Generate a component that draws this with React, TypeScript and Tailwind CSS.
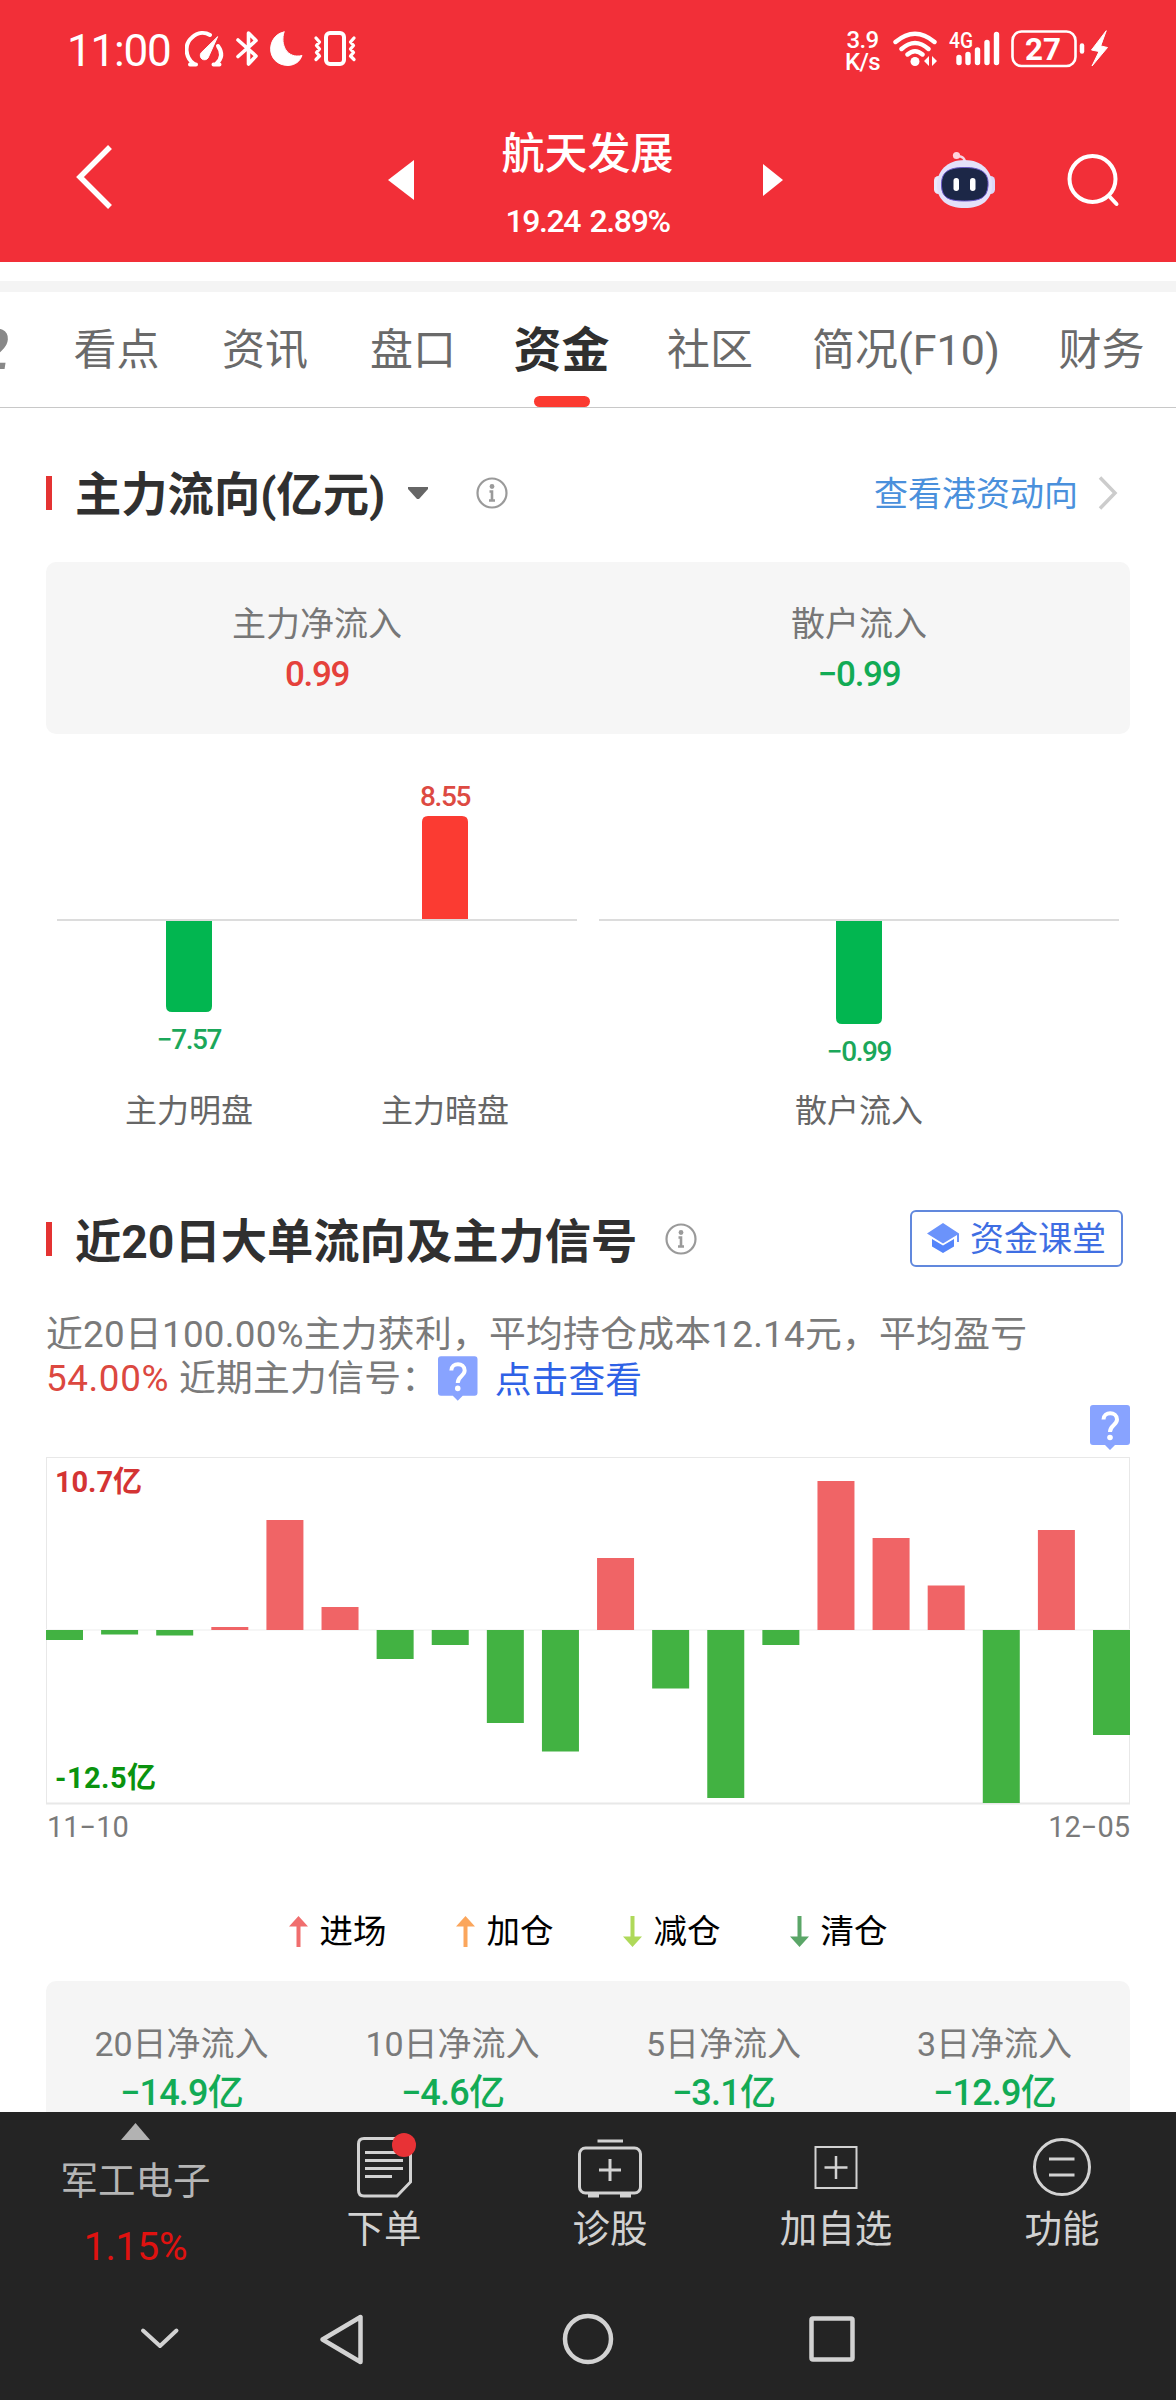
import type { ReactNode } from 'react';

const tabs = [
  { label: '看点', width: 'w-[149px]' },
  { label: '资讯', width: 'w-[148px]' },
  { label: '盘口', width: 'w-[148px]' },
  { label: '资金', width: 'w-[149px]', active: true },
  { label: '社区', width: 'w-[148px]' },
  { label: '简况(F10)', width: 'w-[244px]' },
  { label: '财务', width: 'w-[147px]' },
];

const summary = [
  { label: '主力净流入', value: '0.99', color: 'text-[#e5413b]' },
  { label: '散户流入', value: '−0.99', color: 'text-[#12ab55]' },
];

// x is the bar's centre, size its signed height
const flows = [
  { label: '主力明盘', value: '−7.57', x: 189, size: -91 },
  { label: '主力暗盘', value: '8.55', x: 445, size: 103 },
  { label: '散户流入', value: '−0.99', x: 859, size: -103 },
];

const daily = [-10, -4.5, -5.5, 3, 110, 23, -29, -15, -93, -121.5, 72, -58.5, -168, -15, 149, 92, 44.5, -173, 100, -105];

const signals = [
  { label: '进场', color: '#f06e6e', up: true },
  { label: '加仓', color: '#fba65c', up: true },
  { label: '减仓', color: '#afd95a', up: false },
  { label: '清仓', color: '#5ba668', up: false },
];

const netFlows = [
  { label: '20日净流入', value: '−14.9亿' },
  { label: '10日净流入', value: '−4.6亿' },
  { label: '5日净流入', value: '−3.1亿' },
  { label: '3日净流入', value: '−12.9亿' },
];

function StatusBar() {
  return (
    <div className="h-[98px] pl-[67px] pr-[66px] flex items-center text-white">
      <span className="w-[118px] mt-[3px] text-[44px] leading-[44px] tracking-[-1.200px]">11:00</span>
      <svg width="172" height="38" viewBox="185 31 172 38" fill="none" stroke="#fff" strokeWidth="4" strokeLinecap="round" strokeLinejoin="round">
        <path d="M194 65 C185 59 184 45 192 38.500 C198 33 205 33 210 36" />
        <path d="M190 65.500h6M218 47 C223 54 222 60 216 65 M219.500 65.500h-6" />
        <path d="M217.500 38 L208 59 A4 4 0 1 1 201 54 Z" fill="#fff" strokeWidth="1" />
        <path d="M238 41 L256 57 L248.500 65 V34 L256 41.500 L238 57.500" strokeWidth="3.600" />
        <path d="M284 33 C266 36 265 66 288 66.500 C296 66 300 62 302 56.500 C287 60 280 46 284 33Z" fill="#fff" strokeWidth="1" />
        <rect x="326" y="34" width="18" height="31" rx="4" />
        <path d="M316 39l3.500 4-3 3.500 3 3.500-3 3.500 3 3.500-3.500 3.500M354 39l-3.500 4 3 3.500-3 3.500 3 3.500-3 3.500 3.500 3.500" strokeWidth="3.300" />
      </svg>
      <div className="ml-auto w-[48px] mt-[3px] text-[24px] leading-[22px] text-center font-medium tracking-[-0.6px] pr-[13px]">
        <div>3.9</div>
        <div>K/s</div>
      </div>
      <svg width="217" height="40" viewBox="893 30 217 40" fill="none" stroke="#fff" strokeLinecap="round">
        <path d="M895.500 43 Q915 26.500 934.500 43 M901.500 50 Q915 38 928.500 50 M907.500 55.500 Q915 49 922.500 55.500" strokeWidth="4.400" />
        <circle cx="915" cy="62.500" r="4.500" fill="#fff" stroke="none" />
        <path d="M924 62l5-5v10zM932 57l5 5-5 5z" fill="#fff" stroke="none" />
        <text x="949" y="49" fontSize="22" fontWeight="500" fill="#fff" stroke="none" textLength="24" lengthAdjust="spacingAndGlyphs">4G</text>
        <path d="M959 58.500v5M968 55.500v8M977.500 51v12.500M987 43.500v20M996.500 35.500v28" strokeWidth="5.400" />
        <rect x="1012.500" y="32.500" width="63" height="34.500" rx="9" strokeWidth="2.600" />
        <path d="M1082 46.500v6" strokeWidth="4.500" />
        <text x="1025" y="61" fontSize="32" fontWeight="700" fill="#fff" stroke="none" textLength="36" lengthAdjust="spacingAndGlyphs">27</text>
        <path d="M1106 32 L1091.500 51 L1099 52.500 L1092 67 L1107.500 48.500 L1101 47 Z" fill="#fff" strokeWidth="1" strokeLinejoin="round" />
      </svg>
    </div>
  );
}

function Robot() {
  return (
    <svg className="ml-[151px]" width="62" height="60" viewBox="934 148 62 60">
      <path d="M965 163 Q966 154 957 154" fill="none" stroke="#f5d5e4" strokeWidth="2.500" />
      <circle cx="956.500" cy="153.500" r="3.600" fill="#ffd3dd" />
      <rect x="934" y="174" width="9" height="18" rx="4.500" fill="#ece9fb" />
      <rect x="986" y="174" width="9" height="18" rx="4.500" fill="#dcd7f8" />
      <path d="M964.500 158 C982 158 992 169 992 183 C992 198 982 206 964.500 206 C947 206 937 198 937 183 C937 169 947 158 964.500 158Z" fill="#e4e1fa" />
      <path d="M964.500 165.500 C982 165.500 989 171 988 184 C987 196 980 199 964.500 199 C949 199 942 196 941.500 184 C941 171 947 165.500 964.500 165.500Z" fill="#1c2747" stroke="#6a58c9" strokeWidth="1" />
      <rect x="953.500" y="176" width="5.500" height="13" rx="2.700" fill="#fff" />
      <rect x="970" y="176" width="5.500" height="13" rx="2.700" fill="#fff" />
    </svg>
  );
}

function TitleBar() {
  return (
    <div className="h-[164px] flex items-center text-white">
      <svg className="ml-[75px] mt-[-6px] shrink-0" width="38" height="68" viewBox="0 0 38 68" fill="none" stroke="#fff" strokeWidth="5.500">
        <path d="M35 4 L5 34 L35 64" />
      </svg>
      <svg className="ml-[275px] shrink-0" width="26" height="40" viewBox="0 0 26 40" fill="#fff">
        <path d="M26 0v40L0 20z" />
      </svg>
      <div className="w-[347px] mr-[2px] pt-[15px] flex flex-col items-center">
        <div className="text-[43px] leading-[60px] font-medium">航天发展</div>
        <div className="mt-[7px] text-[32px] leading-[60px] tracking-[-1.400px] [word-spacing:3px] font-medium">19.24 2.89%</div>
      </div>
      <svg className="shrink-0" width="20" height="32" viewBox="0 0 20 32" fill="#fff">
        <path d="M0 0v32l20-16z" />
      </svg>
      <Robot />
      <svg className="ml-[71px] shrink-0" width="54" height="54" viewBox="0 0 54 54" fill="none" stroke="#fff" strokeWidth="4" strokeLinecap="round">
        <circle cx="25.500" cy="26" r="23" />
        <path d="M42 43l7.500 8" />
      </svg>
    </div>
  );
}

function TabBar() {
  return (
    <div className="h-[116px] pt-px border-b border-[#c8c8c8] flex overflow-hidden whitespace-nowrap">
      <div className="w-[42px] shrink-0 flex h-[114px] items-center">
        <span className="ml-[-22px] text-[56px] italic font-bold text-[#888]">2</span>
      </div>
      {tabs.map((t) => (
        <div key={t.label} className={`${t.width} shrink-0 h-[114px] flex flex-col items-center`}>
          <span className={t.active ? 'mt-[2px] h-[101px] text-[48px] leading-[111px] font-bold text-[#2f2f2f]' : 'mt-[2px] text-[43px] leading-[111px] text-[#6a6a6a]'}>
            {t.label}
          </span>
          {t.active && <span className="w-[56px] h-[11px] rounded-full bg-[#fb3a30]" />}
        </div>
      ))}
    </div>
  );
}

function InfoIcon({ className }: { className: string }) {
  return (
    <svg className={className} width="32" height="32" viewBox="0 0 32 32" fill="none" stroke="#9a9a9a" strokeWidth="2.200">
      <circle cx="16" cy="16" r="14.500" />
      <circle cx="16" cy="9.500" r="2.400" fill="#9a9a9a" stroke="none" />
      <path d="M13.500 14.500H16V23.500M13 23.500h6" strokeWidth="2.600" />
    </svg>
  );
}

function SectionTitle({ children }: { children: ReactNode }) {
  return (
    <>
      <span className="w-[6px] h-[34px] bg-[#e43332]" />
      <h2 className="ml-[23px] mt-[5px] text-[46.300px] leading-[56px] font-bold text-[#303030]">{children}</h2>
    </>
  );
}

function QuestionBadge({ className }: { className: string }) {
  return (
    <svg className={className} width="40" height="45" viewBox="0 0 40 45">
      <path d="M3 0h34q3 0 3 3v34q0 3-3 3H25l-5 5-5-5H3q-3 0-3-3V3q0-3 3-3z" fill="#88a3ff" />
      <path d="M13.500 14.500 C13.500 6 27 6 27 14.500 C27 20 20 20 20 27" fill="none" stroke="#fff" strokeWidth="4" />
      <circle cx="20" cy="32.500" r="2.800" fill="#fff" />
    </svg>
  );
}

function FlowChart() {
  return (
    <svg className="mt-[26px] block" width="1084" height="380" viewBox="46 760 1084 380" textAnchor="middle">
      <path d="M57 920H577M599 920H1119" stroke="#dcdcdc" strokeWidth="2" />
      {flows.map((f) => {
        const up = f.size > 0;
        const h = Math.abs(f.size);
        const color = up ? '#fb3b32' : '#02b650';
        return (
          <g key={f.label + f.x}>
            <path
              d={
                up
                  ? `M${f.x - 23} 919v${6 - h}q0-6 6-6h34q6 0 6 6v${h - 6}z`
                  : `M${f.x - 23} 921v${h - 6}q0 6 6 6h34q6 0 6-6v${6 - h}z`
              }
              fill={color}
            />
            <text x={f.x} y={up ? 806 : 958 + h} fontSize="28" fontWeight="500" letterSpacing="-1.4" fill={up ? '#dd4a42' : '#1ba75a'}>
              {f.value}
            </text>
            <text x={f.x} y="1122" fontSize="32" fill="#666">{f.label}</text>
          </g>
        );
      })}
    </svg>
  );
}

function DailyChart() {
  return (
    <svg className="block" width="1084" height="348" viewBox="46 1457 1084 348">
      <rect x="46.500" y="1457.500" width="1083" height="346" fill="none" stroke="#e8e8e8" />
      <path d="M46 1803.500H1130" stroke="#e8e8e8" strokeWidth="2" />
      <path d="M46 1630H1130" stroke="#f6f6f6" strokeWidth="2" />
      {daily.map((v, i) => (
        <rect
          key={i}
          x={46 + i * 55.105}
          y={v > 0 ? 1630 - v : 1630}
          width="37"
          height={Math.abs(v)}
          fill={v > 0 ? '#f06466' : '#42b242'}
        />
      ))}
      <text x="55" y="1492" fontSize="29" fontWeight="700" fill="#d43434" textLength="87">10.7亿</text>
      <text x="55" y="1788" fontSize="29" fontWeight="700" fill="#0a930e" textLength="101">-12.5亿</text>
    </svg>
  );
}

function NavItem({ label, children }: { label: string; children: ReactNode }) {
  return (
    <div className="w-[226px] flex flex-col items-center">
      <svg width="80" height="76" viewBox="0 0 80 76" className="mt-[14px]" fill="none" stroke="#d2d2d2" strokeWidth="3">
        {children}
      </svg>
      <span className="mt-[3px] text-[37.500px] leading-[48px] text-[#d2d2d2]">{label}</span>
    </div>
  );
}

function BottomBar() {
  return (
    <div className="h-[288px] bg-[#242424]">
      <div className="h-[178px] flex">
        <div className="w-[271px] flex flex-col items-center">
          <svg className="mt-[11px]" width="29" height="17" viewBox="0 0 29 17" fill="#b2b2b2">
            <path d="M14.500 0L29 17H0z" />
          </svg>
          <span className="mt-[17px] text-[37.5px] leading-[48px] text-[#b5b5b5]">军工电子</span>
          <span className="mt-[18px] text-[39px] leading-[48px] tracking-[-0.200px] text-[#e01210]">1.15%</span>
        </div>
        <NavItem label="下单">
          <path d="M20 12.500H58Q66.500 12.500 66.500 20V56L53 70H20Q14.500 70 14.500 64V18Q14.500 12.500 20 12.500Z" />
          <path d="M21 26.500H59M21 34.500H59M21 42.500H59M21 50.500H48" />
          <circle cx="60" cy="19" r="12" fill="#e83236" stroke="none" />
        </NavItem>
        <NavItem label="诊股">
          <path d="M27.500 15H53" />
          <rect x="9.500" y="22" width="61" height="45" rx="6" />
          <path d="M40 33V55M29 44H51" />
          <path d="M18 69.500H29M50 69.500H61" strokeWidth="4" />
        </NavItem>
        <NavItem label="加自选">
          <rect x="19.500" y="21" width="41" height="41" strokeWidth="2" />
          <path d="M40 30V53M28.500 41.500H51.500" strokeWidth="2.500" />
        </NavItem>
        <NavItem label="功能">
          <circle cx="40" cy="41" r="27.500" />
          <path d="M27 33H52.500M27 49H52.500" />
        </NavItem>
      </div>
      <svg className="block" width="1176" height="98" viewBox="0 2290 1176 98" fill="none" stroke="#d2d2d2" strokeWidth="4.500" strokeLinecap="round" strokeLinejoin="round">
        <path d="M143 2330.500L160 2346L176.500 2330.500" strokeWidth="4" />
        <path d="M360.500 2317V2362L322.500 2339.500Z" />
        <circle cx="588" cy="2339" r="23" />
        <rect x="811.500" y="2318.500" width="41" height="41" rx="1.500" />
      </svg>
    </div>
  );
}

export default function App() {
  return (
    <div className="w-[1176px] h-[2400px] flex flex-col overflow-hidden bg-white font-[Roboto,'Noto_Sans_CJK_SC',sans-serif]">
      <header className="h-[262px] shrink-0 bg-[#f22f38]">
        <StatusBar />
        <TitleBar />
      </header>
      <div className="mt-[19px] h-[11px] shrink-0 bg-[#f4f4f4]" />
      <TabBar />

      <main className="h-[1704px] shrink-0 px-[46px] overflow-hidden">
        <section>
          <div className="h-[154px] pt-[15px] flex items-center">
            <SectionTitle>主力流向(亿元)</SectionTitle>
            <svg className="ml-[23px]" width="20" height="12" viewBox="0 0 20 12" fill="#666">
              <path d="M0 0h20v2L11 12H9L0 2z" />
            </svg>
            <InfoIcon className="ml-[48px]" />
            <a className="ml-auto mt-[3px] text-[34px] leading-[48px] text-[#4a90dc]">查看港资动向</a>
            <svg className="ml-[20px] mr-[12px]" width="20" height="34" viewBox="0 0 20 34" fill="none" stroke="#ccc" strokeWidth="3.500">
              <path d="M2 1.500L17 17L2 32.500" />
            </svg>
          </div>
          <div className="h-[172px] flex rounded-[10px] bg-[#f6f6f6]">
            {summary.map((s) => (
              <div key={s.label} className="flex-1 pt-[37px] text-center">
                <div className="text-[34px] leading-[50px] text-[#777]">{s.label}</div>
                <div className={`text-[35px] leading-[52px] tracking-[-1.300px] font-medium ${s.color}`}>{s.value}</div>
              </div>
            ))}
          </div>
          <FlowChart />
        </section>

        <section>
          <div className="h-[158px] pt-[40px] flex items-center">
            <SectionTitle>近20日大单流向及主力信号</SectionTitle>
            <InfoIcon className="ml-[28px]" />
            <button className="ml-auto mr-[7px] mt-[-2px] w-[213px] h-[57px] rounded-md border-2 border-[#6188dd] flex items-center pl-[15px]">
              <svg width="32" height="30" viewBox="0 0 32 30" fill="#6b93fb">
                <path d="M16 0L32 10.500V19H30V12L16 20.500L0 10.500z" />
                <path d="M5 16L16 22.500L27 16V23.500L16 30L5 23.500z" fill="#5585fa" />
              </svg>
              <span className="ml-[11px] mt-[2px] text-[34px] leading-[48px] text-[#3e6ee3]">资金课堂</span>
            </button>
          </div>
          <div className="mt-[15px] text-[36.8px] leading-[44px] tracking-[0.250px] text-[#7a7a7a] whitespace-nowrap">
            <p>近20日100.00%主力获利，平均持仓成本12.14元，平均盈亏</p>
            <div className="flex">
              <span className="tracking-[0.600px] text-[#dc4840]">54.00%</span>
              <span className="ml-[10px]">近期主力信号：</span>
              <QuestionBadge className="ml-auto mt-[-1px] mr-[17px]" />
              <a className="mr-[488px] mt-[2px] tracking-normal text-[#2f62e6]">点击查看</a>
            </div>
          </div>
          <QuestionBadge className="ml-auto mt-[2px] mb-[7px]" />
          <DailyChart />
          <div className="h-[46px] flex justify-between text-[29px] leading-[44px] text-[#7a7a7a]">
            <span className="ml-px">11−10</span>
            <span>12−05</span>
          </div>
          <div className="h-[130px] pt-[29px] flex justify-center gap-[69px]">
            {signals.map((s) => (
              <div key={s.label} className="h-[102px] flex items-center gap-3 text-[33.5px]">
                <svg className={s.up ? '' : 'rotate-180'} width="19" height="31" viewBox="0 0 19 31" fill={s.color}>
                  <path d="M9.500 0L19 10.500H11.500V31H7.500V10.500H0z" />
                </svg>
                <span className="mt-[3px]">{s.label}</span>
              </div>
            ))}
          </div>
          <div className="h-[140px] flex rounded-[10px] bg-[#f5f5f5]">
            {netFlows.map((n) => (
              <div key={n.label} className="flex-1 pt-[38px] text-center">
                <div className="text-[34px] leading-[50px] text-[#7a7a7a]">{n.label}</div>
                <div className="text-[36px] leading-[48px] tracking-[-0.800px] font-medium text-[#12ab55]">{n.value}</div>
              </div>
            ))}
          </div>
        </section>
      </main>

      <BottomBar />
    </div>
  );
}
